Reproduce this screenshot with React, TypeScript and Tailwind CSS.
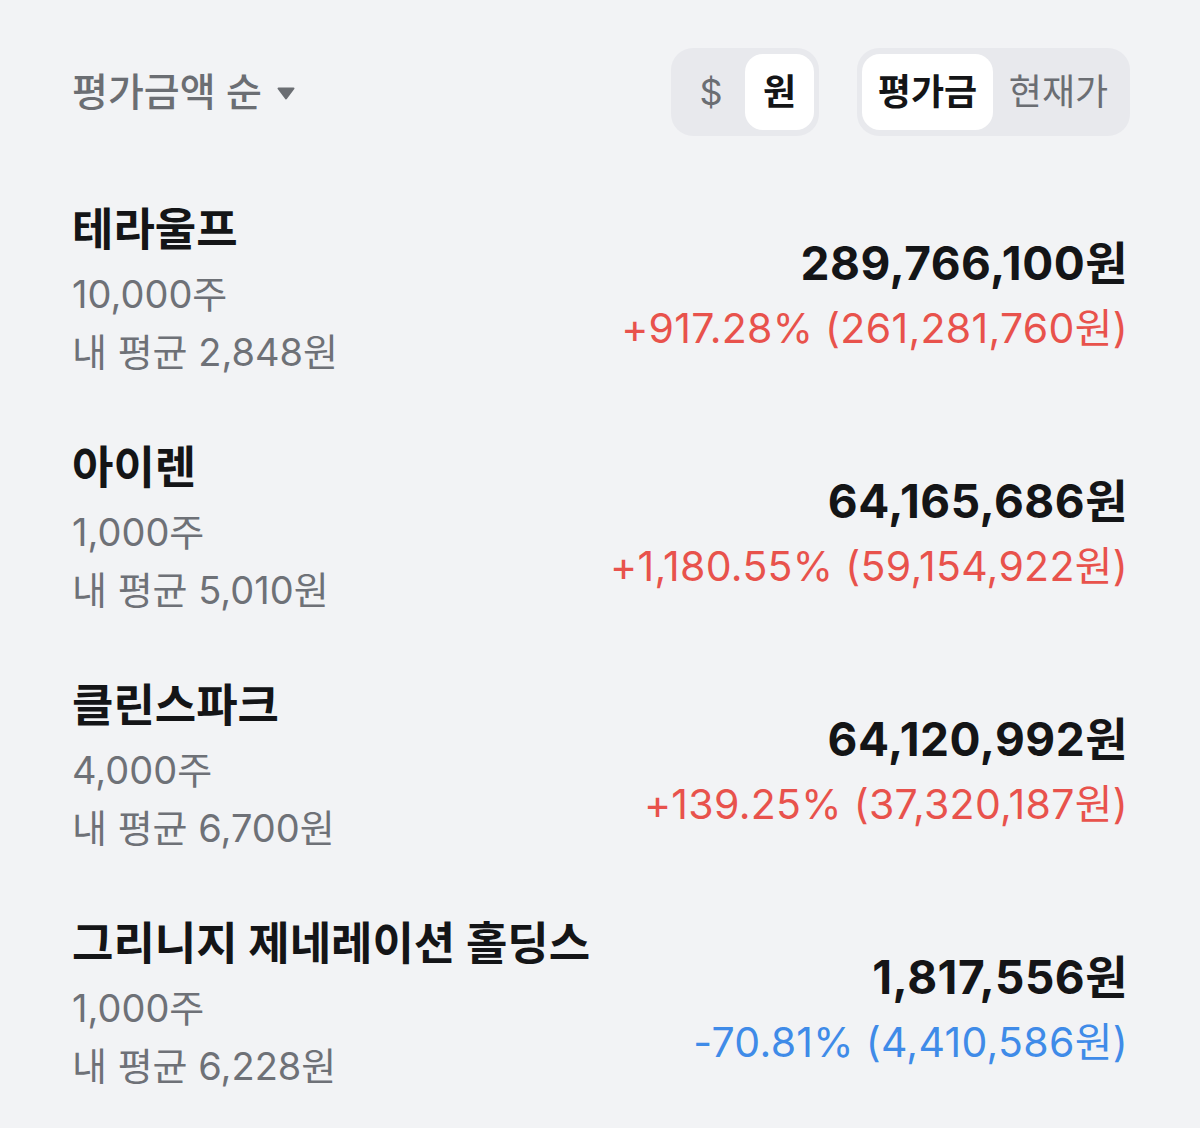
import React from 'react';

type Holding = {
  name: string;
  shares: string;
  avg: string;
  value: string;
  change: string;
  up: boolean;
};

const holdings: Holding[] = [
  { name: '테라울프', shares: '10,000주', avg: '내 평균 2,848원', value: '289,766,100원', change: '+917.28% (261,281,760원)', up: true },
  { name: '아이렌', shares: '1,000주', avg: '내 평균 5,010원', value: '64,165,686원', change: '+1,180.55% (59,154,922원)', up: true },
  { name: '클린스파크', shares: '4,000주', avg: '내 평균 6,700원', value: '64,120,992원', change: '+139.25% (37,320,187원)', up: true },
  { name: '그리니지 제네레이션 홀딩스', shares: '1,000주', avg: '내 평균 6,228원', value: '1,817,556원', change: '-70.81% (4,410,586원)', up: false },
];

function HoldingRow({ h }: { h: Holding }) {
  return (
    <div className="flex items-center justify-between">
      <div className="flex flex-col">
        <div className="text-[45px] leading-[60px] font-bold text-[#141517]">{h.name}</div>
        <div className="mt-[5px] text-[38px] leading-[58px] text-[#6e7177]">{h.shares}</div>
        <div className="text-[38px] leading-[58px] text-[#6e7177]">{h.avg}</div>
      </div>
      <div className="flex flex-col items-end pt-[10px]">
        <div className="text-[46px] leading-[60px] font-bold text-[#141517] tracking-[0.5px]">{h.value}</div>
        <div className={'mt-[5px] text-[41px] leading-[60px] tracking-[0.3px] ' + (h.up ? 'text-[#e8524c]' : 'text-[#3f8be8]')}>
          {h.change}
        </div>
      </div>
    </div>
  );
}

export default function App() {
  return (
    <div
      className="min-h-[1128px] w-[1200px] bg-[#f2f3f5] pl-[72px] pr-[72px] pt-[48px]"
      style={{ fontFamily: 'Inter, "Noto Sans CJK KR", sans-serif' }}
    >
      {/* header */}
      <div className="flex items-center justify-between h-[88px]">
        <div className="flex items-center gap-[15px] text-[39px] text-[#6b6e73] font-medium">
          <span>평가금액 순</span>
          <svg className="w-[18px] h-[13px] mt-[2px]" viewBox="0 0 18 13" fill="currentColor">
            <path d="M1.5 1.5h15L9 11.5z" strokeLinejoin="round" stroke="currentColor" strokeWidth={2} />
          </svg>
        </div>
        <div className="flex items-center gap-[38px] mr-[-2px]">
          <div className="flex h-[88px] w-[148px] rounded-[22px] bg-[#e8e9ed] p-[6px] pr-[5px]">
            <div className="flex flex-1 items-center justify-center text-[36px] text-[#6b6e73]">$</div>
            <div className="flex w-[69px] items-center justify-center rounded-[18px] bg-white text-[36px] font-bold text-[#141517]">원</div>
          </div>
          <div className="flex h-[88px] w-[273px] rounded-[22px] bg-[#e8e9ed] p-[6px] pl-[5px]">
            <div className="flex w-[131px] items-center justify-center rounded-[18px] bg-white text-[36px] font-bold text-[#141517]">평가금</div>
            <div className="flex flex-1 items-center justify-center text-[36px] text-[#6b6e73]">현재가</div>
          </div>
        </div>
      </div>

      {/* holdings */}
      <div className="mt-[64px] flex flex-col gap-[57px]">
        {holdings.map((h) => (
          <HoldingRow key={h.name} h={h} />
        ))}
      </div>
    </div>
  );
}
